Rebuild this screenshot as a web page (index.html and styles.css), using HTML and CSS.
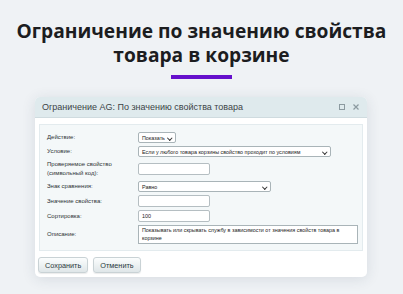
FILE: index.html
```html
<!DOCTYPE html>
<html lang="ru">
<head>
  <meta charset="UTF-8" />
  <meta name="viewport" content="width=device-width, initial-scale=1.0" />
  <title>Ограничение по значению свойства товара в корзине</title>
  <link rel="stylesheet" href="styles.css">
</head>
<body>
  <h1 class="headline">Ограничение по значению свойства товара в корзине</h1>
  <div class="underline"></div>

  <div class="dialog">
    <div class="dialog-head">
      <span class="dialog-title">Ограничение AG: По значению свойства товара</span>
      <span class="dialog-tools">
        <svg width="6" height="6" viewBox="0 0 6 6"><rect x="0.5" y="0.5" width="5" height="5" fill="none" stroke="#8c9aa0" stroke-width="1"/></svg>
        <svg width="6" height="6" viewBox="0 0 6 6"><path d="M0.5 0.5 L5.5 5.5 M5.5 0.5 L0.5 5.5" stroke="#8c9aa0" stroke-width="1.2"/></svg>
      </span>
    </div>

    <div class="dialog-body">
      <div class="panel">
        <div class="form-grid">
          <label>Действие:</label>
          <div><span class="select sel-small">Показать <i class="caret"></i></span></div>

          <label>Условие:</label>
          <div><span class="select sel-wide">Если у любого товара корзины свойство проходит по условиям <i class="caret"></i></span></div>

          <label>Проверяемое свойство<br>(символьный код):</label>
          <div><span class="input"></span></div>

          <label>Знак сравнения:</label>
          <div><span class="select sel-mid">Равно <i class="caret"></i></span></div>

          <label>Значение свойства:</label>
          <div><span class="input"></span></div>

          <label>Сортировка:</label>
          <div><span class="input">100</span></div>

          <label>Описание:</label>
          <div><span class="textarea">Показывать или скрывать службу в зависимости от значения свойств товара в корзине</span></div>
        </div>
      </div>

      <div class="buttons">
        <button>Сохранить</button>
        <button>Отменить</button>
      </div>
    </div>
  </div>
</body>
</html>
```

FILE: styles.css
```css
body {
  margin: 0;
  background: #eff2f5;
  font-family: "Open Sans", "Noto Sans", sans-serif;
  width: 403px;
  height: 294px;
  overflow: hidden;
}
.headline {
  margin: 19px 0 0;
  text-align: center;
  font-size: 19.2px;
  line-height: 24px;
  font-weight: 700;
  color: #1c1d1f;
}
.underline {
  width: 61px;
  height: 4px;
  background: #6610cc;
  margin: 8px 0 0 171px;
}
.dialog {
  margin: 18px 0 0 35px;
  width: 332px;
  height: 180px;
  background: #fff;
  border-radius: 5px;
  box-shadow: 0 2px 14px rgba(40, 60, 80, 0.12);
  font-family: "Liberation Sans", Arial, sans-serif;
  overflow: hidden;
}
.dialog-head {
  height: 20px;
  background: #dfeaed;
  border-bottom: 1px solid #cfdbdf;
  display: flex;
  align-items: center;
  justify-content: space-between;
  padding: 0 8px 0 7px;
}
.dialog-title {
  font-size: 9px;
  color: #3c4447;
}
.dialog-tools {
  display: flex;
  gap: 8px;
  align-items: center;
}
.dialog-body {
  padding: 6px 4px 0 4px;
}
.panel {
  background: #f4f8f9;
  border: 1px solid #e3ebee;
  height: 127px;
  padding: 7px 6px 0 7px;
  box-sizing: border-box;
}
.form-grid {
  display: grid;
  grid-template-columns: 91px 1fr;
  row-gap: 3px;
  font-size: 6px;
  color: #2f3436;
}
.form-grid label {
  display: flex;
  align-items: center;
  line-height: 9px;
}
.form-grid > div {
  display: flex;
  align-items: center;
}
.select, .input, .textarea {
  box-sizing: border-box;
  background: #fff;
  border: 1px solid #a9b4b8;
  border-radius: 2px;
  font-size: 5.4px;
  color: #222;
  display: flex;
  align-items: center;
  padding: 0 3px;
  position: relative;
}
.select {
  height: 11px;
}
.sel-small { width: 38px; }
.sel-wide { width: 193px; }
.sel-mid { width: 133px; }
.caret {
  position: absolute;
  right: 4px;
  top: 2.5px;
  width: 2.5px;
  height: 2.5px;
  border-right: 1px solid #333;
  border-bottom: 1px solid #333;
  transform: rotate(45deg);
}
.input {
  width: 72px;
  height: 12px;
  border-color: #b5bec2;
}
.textarea {
  width: 220px;
  height: 19px;
  border-radius: 0;
  align-items: flex-start;
  line-height: 7.5px;
  padding: 1px 3px;
}
.buttons {
  display: flex;
  gap: 5px;
  margin: 6px 0 0 -1px;
}
button {
  height: 16px;
  padding: 0 6px;
  font-family: "Liberation Sans", Arial, sans-serif;
  font-size: 7.3px;
  color: #2b3a40;
  background: linear-gradient(#fbfdfd, #dfe6e8);
  border: 1px solid #c9d2d5;
  border-radius: 3px;
  box-shadow: 0 1px 1px rgba(0,0,0,0.08);
}
```
